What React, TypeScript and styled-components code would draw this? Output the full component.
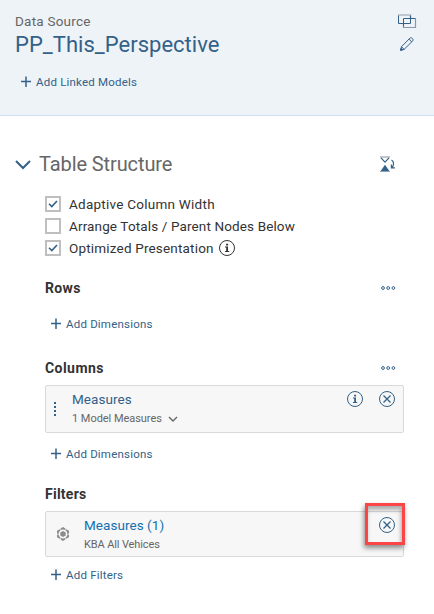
import React from "react";
import styled, { createGlobalStyle } from "styled-components";

const GlobalStyle = createGlobalStyle`
  *, *::before, *::after { box-sizing: border-box; }
  body { margin: 0; background: #fff; font-family: Roboto, "Liberation Sans", sans-serif; }
  svg { display: block; flex: none; overflow: visible; }
`;

const Panel = styled.div`
  width: 434px;
  height: 614px;
  background: #fff;
  overflow: hidden;
`;

const Header = styled.header`
  display: flex;
  justify-content: space-between;
  height: 116px;
  padding: 11px 18px 0 15px;
  background: #eef3f8;
  border-bottom: 1px solid #cddff0;
`;

const HeaderTools = styled.div`
  display: flex;
  flex-direction: column;
  align-items: center;
  gap: 9px;
  padding-top: 3px;
`;

const Text = styled.span<{ $size: number; $line: number; $color: string; $spacing?: number; $weight?: number }>`
  display: block;
  font-size: ${(p) => p.$size}px;
  line-height: ${(p) => p.$line}px;
  color: ${(p) => p.$color};
  letter-spacing: ${(p) => p.$spacing ?? 0}px;
  font-weight: ${(p) => p.$weight ?? 400};
  white-space: nowrap;
`;

const AddButton = styled.button<{ $spacing: number }>`
  display: flex;
  align-items: center;
  gap: 4px;
  height: 20px;
  margin: 0;
  padding: 0 0 0 5px;
  border: 0;
  background: none;
  color: #346187;
  font: 400 11.5px/20px Roboto, "Liberation Sans", sans-serif;
  letter-spacing: ${(p) => p.$spacing}px;
  white-space: nowrap;
`;

const LinkedRow = styled.div`
  padding-top: 13px;
`;

const Body = styled.main`
  padding: 34px 30px 0 15px;
`;

const SectionTitle = styled.div`
  display: flex;
  align-items: center;
  height: 28px;
  gap: 8px;
  padding-right: 8px;
`;

const Spacer = styled.span`
  flex: 1;
`;

const Content = styled.div`
  padding: 15px 0 0 30px;
`;

const Option = styled.div`
  display: flex;
  align-items: center;
  height: 22px;
`;

const OptionLabel = styled.div`
  display: flex;
  align-items: center;
  gap: 5px;
  padding-left: 8px;
`;

const Box = styled.span`
  display: flex;
  align-items: center;
  justify-content: center;
  flex: none;
  width: 16px;
  height: 16px;
  background: #fff;
  border: 2px solid #bfbfbf;
`;

const Group = styled.section<{ $top: number }>`
  margin-top: ${(p) => p.$top}px;
`;

const GroupHead = styled.div`
  display: flex;
  align-items: center;
  justify-content: space-between;
  height: 20px;
  padding-right: 8px;
`;

const Action = styled.div<{ $top: number }>`
  margin-top: ${(p) => p.$top}px;
`;

const Card = styled.div<{ $height: number }>`
  position: relative;
  display: flex;
  width: 359px;
  height: ${(p) => p.$height}px;
  margin-top: 7px;
  background: #f7f7f7;
  border: 1px solid #d9d9d9;
  border-radius: 2px;
`;

const CardLead = styled.div<{ $width: number; $pad: number }>`
  display: flex;
  align-items: center;
  width: ${(p) => p.$width}px;
  padding-left: ${(p) => p.$pad}px;
`;

const CardText = styled.div`
  display: flex;
  flex-direction: column;
  flex: 1;
  padding-top: 3px;
`;

const Inline = styled.div`
  display: flex;
  align-items: center;
  gap: 6px;
`;

const CardTools = styled.div`
  display: flex;
  gap: 16px;
  padding: 5px 8px 0 0;
`;

const Highlight = styled.div`
  position: absolute;
  top: -9px;
  right: -2px;
  width: 40px;
  height: 42px;
  border: 3px solid #fb4547;
  box-shadow: -1px 3px 5px rgba(0, 0, 0, 0.45), inset -1px 4px 4px rgba(0, 0, 0, 0.32);
`;

const BLUE = "#346187";

const Plus = () => (
  <svg width="12" height="12" viewBox="0 0 12 12">
    <path d="M1 5.500h10M6 .5v10.500" stroke={BLUE} strokeWidth="1.500" />
  </svg>
);

const Chevron = ({ w, h, color, stroke }: { w: number; h: number; color: string; stroke: number }) => (
  <svg width={w} height={h} viewBox={`0 0 ${w} ${h}`} fill="none">
    <path d={`M1 1L${w / 2} ${h - 1}L${w - 1} 1`} stroke={color} strokeWidth={stroke} />
  </svg>
);

const Overlap = () => (
  <svg width="18" height="14" viewBox="0 0 18 14" fill="none">
    <path d="M0 1h12.500v3.500" stroke="#b3b9c4" strokeWidth="1.600" />
    <path d="M5.500 9.500v4h12v-9" stroke="#8799b0" strokeWidth="1.200" />
    <path d="M.5 1.500v8h12v-8M5.500 12.500v-8h12" stroke={BLUE} />
  </svg>
);

const Pencil = () => (
  <svg width="14" height="14" viewBox="0 0 14 14" fill="none" stroke={BLUE} strokeLinejoin="round">
    <path d="M.6 13.300L1.500 9.700 10.100 1Q10.800.3 11.600 1L12.900 2.200Q13.600 3 12.800 3.800L4.100 12.400ZM1.500 9.700L4.100 12.400M9 2.100L11.700 4.900" />
    <path d="M.6 13.300l.5-2 1.500 1.500z" fill={BLUE} />
  </svg>
);

const Hourglass = () => (
  <svg width="16" height="16" viewBox="0 0 16 16" fill="none">
    <path d="M0 1h10" stroke="#b3b9c4" strokeWidth="1.600" />
    <path d="M1 1.800L5 6.200 9 1.800" stroke={BLUE} strokeWidth="1.200" />
    <path d="M5 8.800L.7 15h8.600z" fill={BLUE} />
    <path d="M0 15.500h10" stroke="#8fa3bb" />
    <path d="M11.500 4C14 5.500 14.200 8.500 12.100 11.500M11.400 8.500v3.300h3.500" stroke={BLUE} strokeWidth="1.200" />
  </svg>
);

const Info = ({ color }: { color: string }) => (
  <svg width="16" height="16" viewBox="0 0 16 16" fill="none">
    <circle cx="8" cy="8" r="7.500" stroke={color} />
    <path d="M7.100 3.700h2v1.800h-2zM6 6.600h3v4.500h1.200v1H6v-1h1.200V7.500H6z" fill={color} />
  </svg>
);

const Close = () => (
  <svg width="16" height="16" viewBox="0 0 16 16" fill="none" stroke={BLUE}>
    <circle cx="8" cy="8" r="7.500" />
    <path d="M4.500 4.500l7 7M11.500 4.500l-7 7" strokeWidth="1.300" />
  </svg>
);

const More = () => (
  <svg width="15" height="5" viewBox="0 0 15 5" fill="none" stroke={BLUE}>
    <circle cx="2" cy="2" r="1.400" />
    <circle cx="7.200" cy="2" r="1.400" />
    <circle cx="12.400" cy="2" r="1.400" />
  </svg>
);

const Grip = () => (
  <svg width="2" height="14" viewBox="0 0 2 14" fill={BLUE}>
    <path d="M0 0h2v2H0zM0 4h2v2H0zM0 8h2v2H0zM0 12h2v2H0z" />
  </svg>
);

const Model = () => (
  <svg width="14" height="14" viewBox="0 0 14 14">
    <g fill="#8c8c8c">
      <path d="M7 3.900l2.700 1.550v3.100L7 10.100 4.300 8.550v-3.100z" />
      <path d="M4.600 1.500L7 .1l2.400 1.400v1.600L7 2.400l-2.400.7z" />
      <path d="M4.600 12.500L7 13.900l2.400-1.400v-1.600l-2.400.7-2.400-.7z" />
      <path d="M10.300 2.200L13 3.700v2.800l-1.500.4-.7-2.300-1.300-.9z" />
      <path d="M3.700 2.200L1 3.700v2.800l1.500.4.7-2.300 1.300-.9z" />
      <path d="M10.300 11.800l2.700-1.500V7.700l-1.500-.4-.7 2.100-1.300.9z" />
      <path d="M3.700 11.800L1 10.300V7.700l1.500-.4.7 2.100 1.300.9z" />
    </g>
  </svg>
);

const Check = () => (
  <svg width="10" height="8" viewBox="0 0 10 8" fill="none">
    <path d="M1 3.800L3.800 6.600 9 1" stroke={BLUE} strokeWidth="1.600" />
  </svg>
);

const options = [
  { label: "Adaptive Column Width", checked: true, info: false, spacing: 0.25 },
  { label: "Arrange Totals / Parent Nodes Below", checked: false, info: false, spacing: 0.13 },
  { label: "Optimized Presentation", checked: true, info: true, spacing: 0.18 },
];

const Add = ({ label, spacing }: { label: string; spacing: number }) => (
  <AddButton $spacing={spacing}>
    <Plus />
    {label}
  </AddButton>
);

const Heading = ({ label, spacing, menu }: { label: string; spacing: number; menu?: boolean }) => (
  <GroupHead>
    <Text $size={14} $line={20} $color="#333" $weight={700} $spacing={spacing}>{label}</Text>
    {menu && <More />}
  </GroupHead>
);

export default function App() {
  return (
    <Panel>
      <GlobalStyle />
      <Header>
        <div>
          <Text $size={13.5} $line={20} $color="#666" $spacing={0.22}>Data Source</Text>
          <Text $size={22} $line={28} $color={BLUE} $spacing={0.02}>PP_This_Perspective</Text>
          <LinkedRow><Add label="Add Linked Models" spacing={0.2} /></LinkedRow>
        </div>
        <HeaderTools>
          <Overlap />
          <Pencil />
        </HeaderTools>
      </Header>
      <Body>
        <SectionTitle>
          <Chevron w={16} h={9} color={BLUE} stroke={2} />
          <Text $size={20} $line={28} $color="#666" $spacing={-0.1}>Table Structure</Text>
          <Spacer />
          <Hourglass />
        </SectionTitle>
        <Content>
          {options.map((o) => (
            <Option key={o.label}>
              <Box>{o.checked && <Check />}</Box>
              <OptionLabel>
                <Text $size={13.5} $line={22} $color="#333" $spacing={o.spacing}>{o.label}</Text>
                {o.info && <Info color="#333" />}
              </OptionLabel>
            </Option>
          ))}
          <Group $top={19}>
            <Heading label="Rows" spacing={0.35} menu />
            <Action $top={16}><Add label="Add Dimensions" spacing={0.2} /></Action>
          </Group>
          <Group $top={24}>
            <Heading label="Columns" spacing={0.45} menu />
            <Card $height={48}>
              <CardLead $width={26} $pad={8}><Grip /></CardLead>
              <CardText>
                <Text $size={13.5} $line={21} $color={BLUE} $spacing={0.05}>Measures</Text>
                <Inline>
                  <Text $size={11} $line={17} $color="#666" $spacing={-0.04}>1 Model Measures</Text>
                  <Chevron w={10} h={6} color="#666" stroke={1.4} />
                </Inline>
              </CardText>
              <CardTools>
                <Info color={BLUE} />
                <Close />
              </CardTools>
            </Card>
            <Action $top={11}><Add label="Add Dimensions" spacing={0.2} /></Action>
          </Group>
          <Group $top={20}>
            <Heading label="Filters" spacing={0.25} />
            <Card $height={46}>
              <CardLead $width={38} $pad={10}><Model /></CardLead>
              <CardText>
                <Text $size={13.5} $line={20} $color="#1370af" $spacing={0.05}>Measures (1)</Text>
                <Text $size={11} $line={19} $color="#666" $spacing={-0.12}>KBA All Vehices</Text>
              </CardText>
              <CardTools>
                <Close />
              </CardTools>
              <Highlight />
            </Card>
            <Action $top={8}><Add label="Add Filters" spacing={0.2} /></Action>
          </Group>
        </Content>
      </Body>
    </Panel>
  );
}
